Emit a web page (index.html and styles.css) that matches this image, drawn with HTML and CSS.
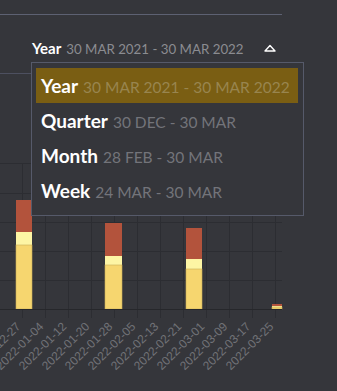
FILE: index.html
```html
<!DOCTYPE html>
<html lang="en">
<head>
  <meta charset="UTF-8">
  <meta name="viewport" content="width=device-width, initial-scale=1.0">
  <title>Period Picker</title>
  <link rel="stylesheet" href="styles.css">
</head>
<body>
  <div class="page">
    <div class="top-rule"></div>

    <div class="picker">
      <div class="picker-header">
        <span class="picker-label">Year</span>
        <span class="picker-range">30 MAR 2021 - 30 MAR 2022</span>
        <svg class="caret" width="12" height="8" viewBox="0 0 12 8">
          <path d="M1 7 L6 1.5 L11 7 Z" fill="none" stroke="#fff" stroke-width="1.4" stroke-linejoin="round"/>
        </svg>
      </div>

      <ul class="period-menu">
        <li class="period-item active">
          <span class="period-name">Year</span>
          <span class="period-range">30 MAR 2021 - 30 MAR 2022</span>
        </li>
        <li class="period-item">
          <span class="period-name">Quarter</span>
          <span class="period-range">30 DEC - 30 MAR</span>
        </li>
        <li class="period-item">
          <span class="period-name">Month</span>
          <span class="period-range">28 FEB - 30 MAR</span>
        </li>
        <li class="period-item">
          <span class="period-name">Week</span>
          <span class="period-range">24 MAR - 30 MAR</span>
        </li>
      </ul>
    </div>

    <div class="chart-rule"></div>

    <svg class="chart" width="337" height="317" viewBox="0 0 337 317">
      <g class="grid">
        <line x1="0" y1="89.5" x2="282" y2="89.5"/>
        <line x1="0" y1="119.5" x2="282" y2="119.5"/>
        <line x1="0" y1="148.5" x2="282" y2="148.5"/>
        <line x1="0" y1="177.5" x2="282" y2="177.5"/>
        <line x1="0" y1="206.5" x2="282" y2="206.5"/>
        <line x1="22.5" y1="89" x2="22.5" y2="244"/>
        <line x1="45.5" y1="89" x2="45.5" y2="244"/>
        <line x1="68.5" y1="89" x2="68.5" y2="244"/>
        <line x1="91.5" y1="89" x2="91.5" y2="244"/>
        <line x1="114.5" y1="89" x2="114.5" y2="244"/>
        <line x1="137.5" y1="89" x2="137.5" y2="244"/>
        <line x1="160.5" y1="89" x2="160.5" y2="244"/>
        <line x1="183.5" y1="89" x2="183.5" y2="244"/>
        <line x1="206.5" y1="89" x2="206.5" y2="244"/>
        <line x1="229.5" y1="89" x2="229.5" y2="244"/>
        <line x1="252.5" y1="89" x2="252.5" y2="244"/>
        <line x1="275.5" y1="89" x2="275.5" y2="244"/>
      </g>

      <g class="bars">
        <rect class="seg-red" x="16" y="126" width="16" height="32"/>
        <rect class="seg-light" x="16" y="158" width="16" height="13"/>
        <rect class="seg-yellow" x="16" y="171" width="16" height="64"/>

        <rect class="seg-red" x="105" y="149" width="17" height="33"/>
        <rect class="seg-light" x="105" y="182" width="17" height="9"/>
        <rect class="seg-yellow" x="105" y="191" width="17" height="44"/>

        <rect class="seg-red" x="186" y="154" width="16" height="31"/>
        <rect class="seg-light" x="186" y="185" width="16" height="10"/>
        <rect class="seg-yellow" x="186" y="195" width="16" height="40"/>

        <rect class="seg-red" x="272" y="230" width="10" height="2"/>
        <rect class="seg-light" x="272" y="232" width="10" height="1"/>
        <rect class="seg-yellow" x="272" y="233" width="10" height="2"/>
      </g>

      <line class="baseline" x1="0" y1="235.5" x2="282" y2="235.5"/>

      <g class="x-labels">
        <text transform="translate(19 251) rotate(-45)">2021-12-27</text>
        <text transform="translate(42 251) rotate(-45)">2022-01-04</text>
        <text transform="translate(65 251) rotate(-45)">2022-01-12</text>
        <text transform="translate(88 251) rotate(-45)">2022-01-20</text>
        <text transform="translate(111 251) rotate(-45)">2022-01-28</text>
        <text transform="translate(134 251) rotate(-45)">2022-02-05</text>
        <text transform="translate(157 251) rotate(-45)">2022-02-13</text>
        <text transform="translate(180 251) rotate(-45)">2022-02-21</text>
        <text transform="translate(203 251) rotate(-45)">2022-03-01</text>
        <text transform="translate(226 251) rotate(-45)">2022-03-09</text>
        <text transform="translate(249 251) rotate(-45)">2022-03-17</text>
        <text transform="translate(272 251) rotate(-45)">2022-03-25</text>
      </g>
    </svg>
  </div>
</body>
</html>
```

FILE: styles.css
```css
body {
  margin: 0;
  background-color: #35363b;
  font-family: Lato, "Open Sans", sans-serif;
  color: #fff;
  overflow: hidden;
}

.page {
  width: 337px;
  height: 391px;
}

.top-rule {
  width: 282px;
  height: 1px;
  margin-top: 14px;
  background-color: #5d6172;
}

.picker {
  position: relative;
  margin-top: 23px;
  padding-left: 32px;
}

.picker-header {
  display: flex;
  align-items: baseline;
  height: 20px;
  line-height: 20px;
}

.picker-label {
  font-size: 15px;
  font-weight: 700;
}

.picker-range {
  margin-left: 5px;
  font-size: 13.3px;
  color: #8b8c91;
}

.caret {
  align-self: center;
  margin-left: 20px;
}

.period-menu {
  position: absolute;
  top: 24px;
  left: 31px;
  z-index: 2;
  width: 262px;
  margin: 0;
  padding: 5px 5px 7px 4px;
  list-style: none;
  background-color: #35363b;
  border: 1px solid #565a6a;
}

.period-item {
  display: flex;
  align-items: baseline;
  height: 35px;
  line-height: 36px;
  padding-left: 5px;
  white-space: nowrap;
}

.period-item.active {
  background-color: #7a5e13;
}

.period-name {
  font-size: 19px;
  font-weight: 700;
}

.period-range {
  margin-left: 5px;
  font-size: 15.5px;
  color: #73747a;
}

.period-item.active .period-range {
  color: #98854f;
}

.chart-rule {
  width: 282px;
  height: 1px;
  margin-top: 15px;
  background-color: #4d5060;
}

.chart {
  display: block;
}

.grid line {
  stroke: #2c2d32;
  stroke-width: 1;
}

.baseline {
  stroke: #26272b;
  stroke-width: 1;
}

.seg-red {
  fill: #b3533c;
}

.seg-light {
  fill: #fdf5a4;
}

.seg-yellow {
  fill: #f6d66f;
  stroke: #c9ad58;
  stroke-width: 0.6;
}

.x-labels text {
  font-family: "Liberation Sans", Arial, sans-serif;
  font-size: 12px;
  fill: #717277;
  text-anchor: end;
  dominant-baseline: middle;
}
```
